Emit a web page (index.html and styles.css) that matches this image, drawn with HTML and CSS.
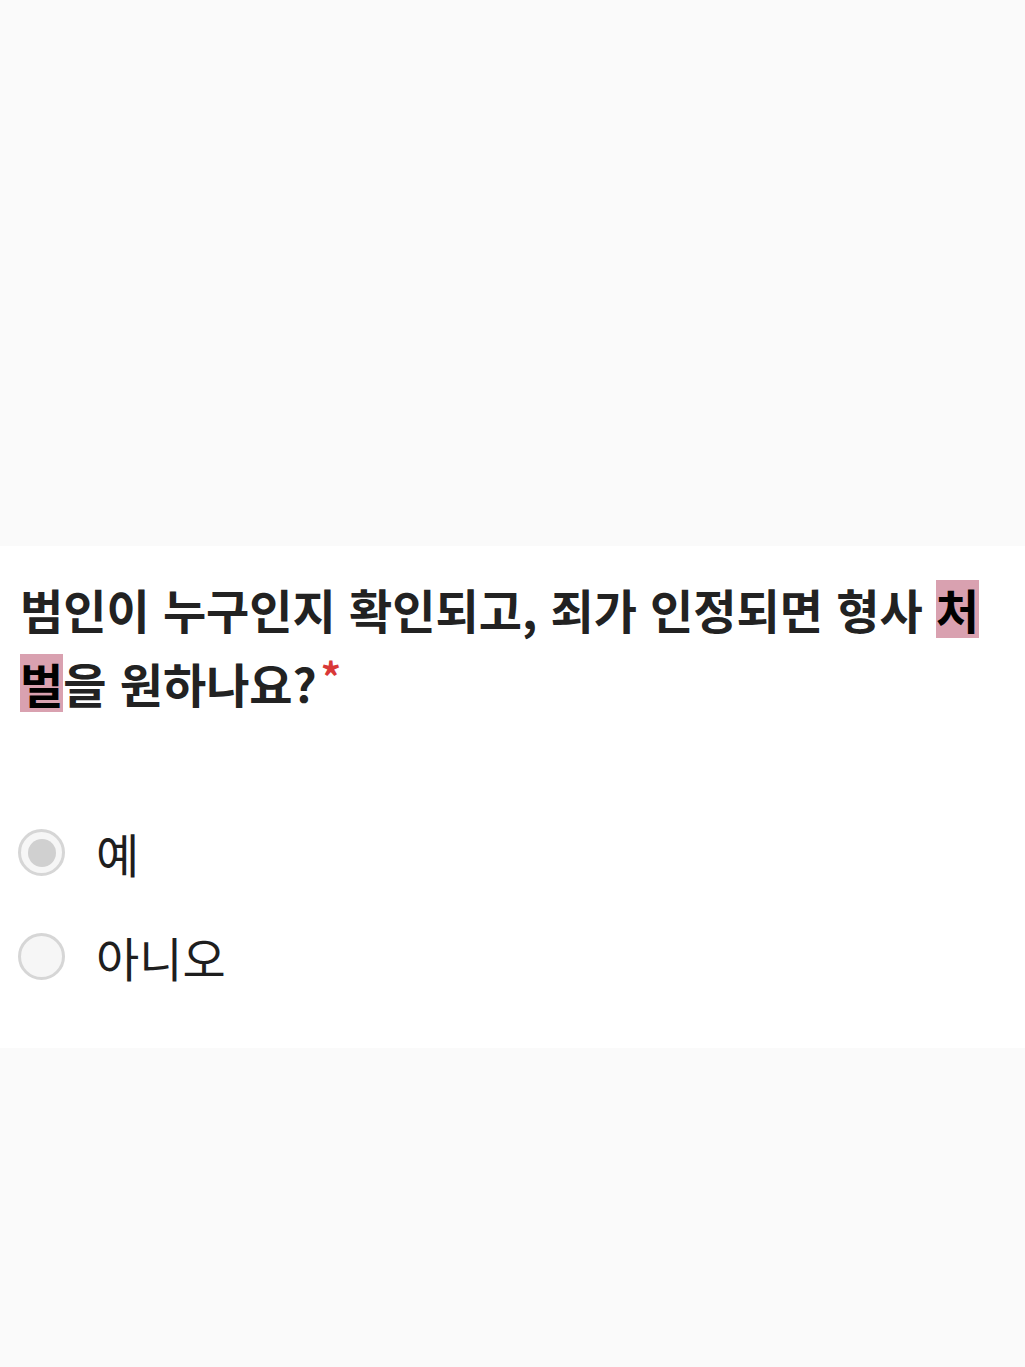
FILE: index.html
```html
<!DOCTYPE html>
<html lang="ko">
<head>
    <meta charset="UTF-8">
    <meta name="viewport" content="width=device-width, initial-scale=1.0">
    <title>형사 처벌 의사</title>
    <link rel="stylesheet" href="styles.css">
</head>
<body>
    <div class="top-space"></div>

    <div class="question-card">
        <h2 class="question-title">범인이 누구인지 확인되고, 죄가 인정되면 형사 <span class="mark">처</span><span class="mark">벌</span>을 원하나요?<span class="required">*</span></h2>

        <div class="option-list">
            <label class="option">
                <span class="radio checked"><span class="radio-dot"></span></span>
                <span class="option-text">예</span>
            </label>
            <label class="option">
                <span class="radio"></span>
                <span class="option-text">아니오</span>
            </label>
        </div>
    </div>

    <div class="bottom-space"></div>
</body>
</html>
```

FILE: styles.css
```css
html, body {
  margin: 0;
  padding: 0;
  background: #fafafa;
  font-family: "Noto Sans CJK KR", "Noto Sans", sans-serif;
  color: #222;
}

.top-space {
  height: 546px;
}

.question-card {
  background: #fff;
  padding: 26px 10px 68px 20px;
}

.question-title {
  margin: 0;
  font-size: 47px;
  font-weight: 700;
  line-height: 74px;
  color: #222;
}

.mark {
  background: #d9a1b0;
  color: #000;
  display: inline-block;
  line-height: 58px;
  vertical-align: baseline;
}

.required {
  color: #d93838;
  font-size: 40px;
  line-height: 0;
  vertical-align: 10px;
  margin-left: 4px;
}

/* 선택지 */
.option-list {
  margin-top: 109px;
  display: flex;
  flex-direction: column;
  gap: 57px;
}

.option {
  display: flex;
  align-items: center;
  height: 47px;
}

.radio {
  width: 41px;
  height: 41px;
  border: 3px solid #d6d6d6;
  border-radius: 50%;
  background: #f6f6f6;
  display: flex;
  align-items: center;
  justify-content: center;
  margin-left: -2px;
}

.radio-dot {
  width: 28px;
  height: 28px;
  border-radius: 50%;
  background: #d0d0d0;
}

.option-text {
  margin-left: 31px;
  font-size: 47px;
  font-weight: 400;
  color: #1e1e1e;
}

.bottom-space {
  height: 320px;
}
```
